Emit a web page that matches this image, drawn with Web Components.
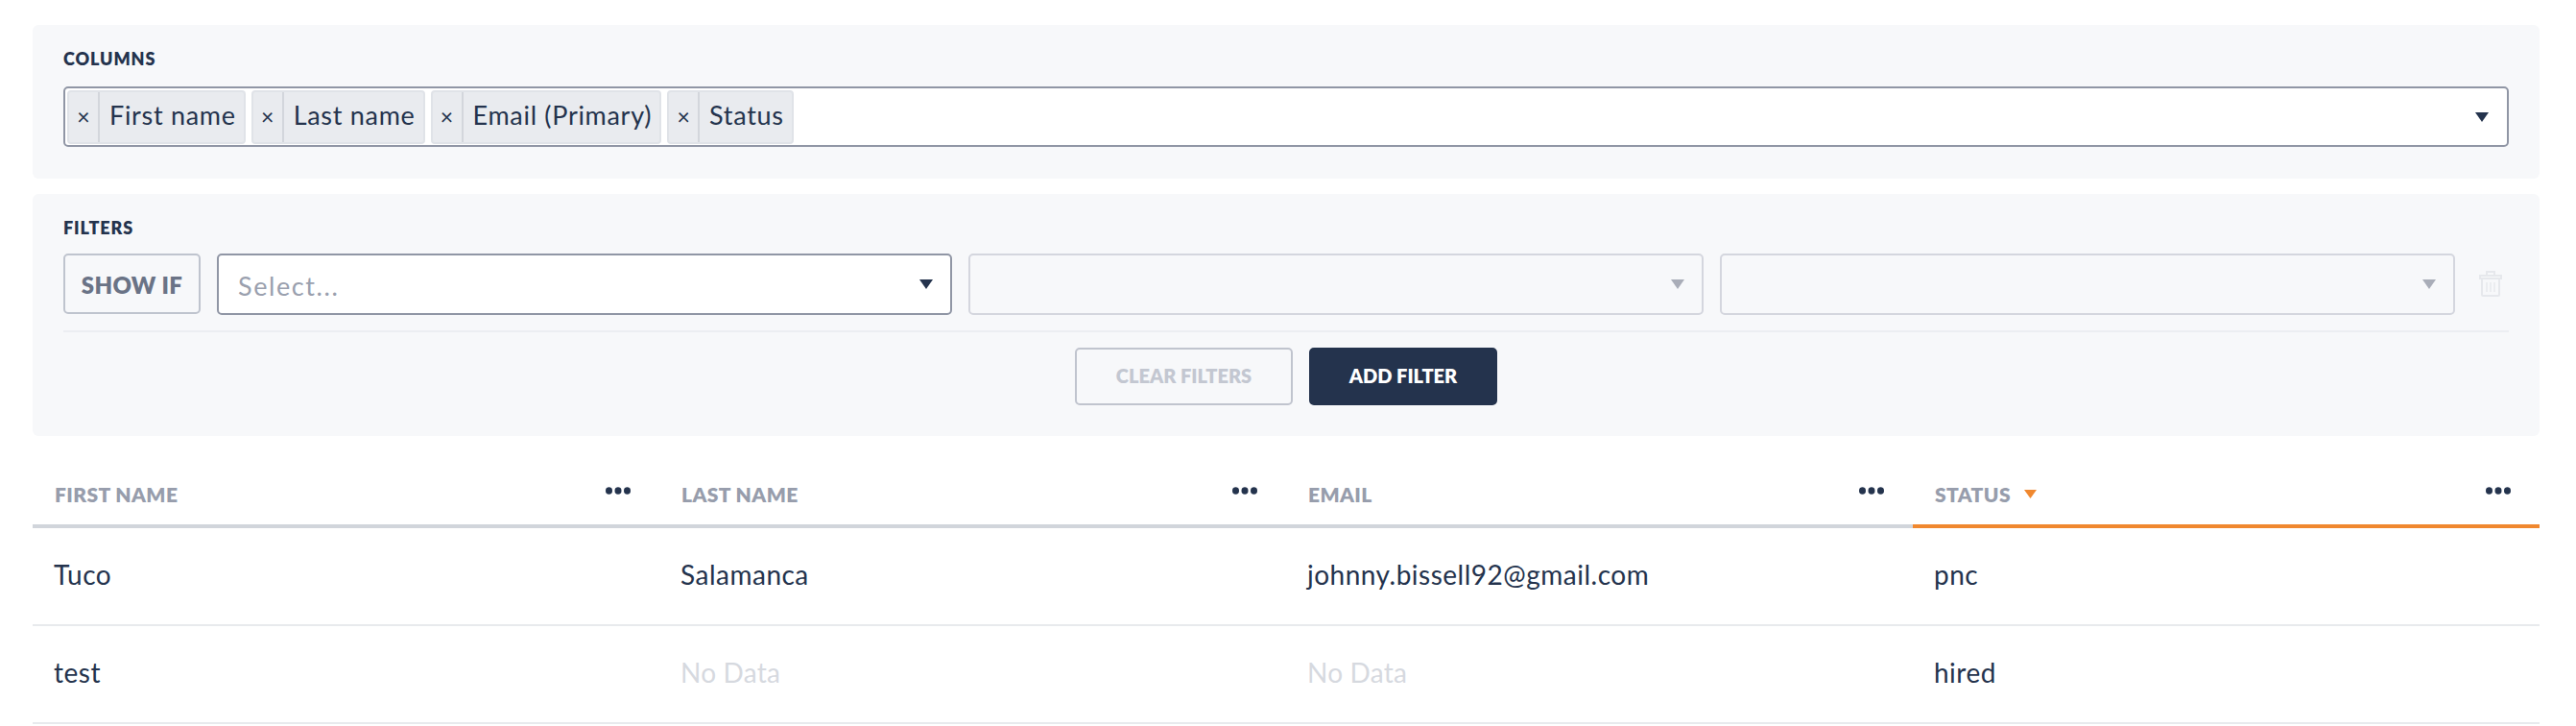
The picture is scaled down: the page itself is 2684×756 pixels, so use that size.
<!DOCTYPE html>
<html>
<head>
<meta charset="utf-8">
<title>Table</title>
<style>
  html, body { margin: 0; background: #fff; }
  body { font-family: Lato, "Open Sans", sans-serif; color: #24334d; }
</style>
</head>
<body>
<report-page>
  <filter-panel label="Columns" gap="19" bottom="33">
    <multi-select>
      <tag-chip>First name</tag-chip>
      <tag-chip>Last name</tag-chip>
      <tag-chip>Email (Primary)</tag-chip>
      <tag-chip>Status</tag-chip>
    </multi-select>
  </filter-panel>
  <filter-panel label="Filters" gap="17" bottom="32">
    <filter-row>
      <show-if>Show if</show-if>
      <filter-select placeholder="Select..."></filter-select>
      <filter-select disabled></filter-select>
      <filter-select disabled></filter-select>
      <trash-icon></trash-icon>
    </filter-row>
    <filter-actions>
      <action-button disabled>Clear filters</action-button>
      <action-button>Add filter</action-button>
    </filter-actions>
  </filter-panel>
  <data-table>
    <table-row header>
      <head-cell>First name</head-cell>
      <head-cell>Last name</head-cell>
      <head-cell>Email</head-cell>
      <head-cell sorted>Status</head-cell>
    </table-row>
    <table-row>
      <data-cell>Tuco</data-cell>
      <data-cell>Salamanca</data-cell>
      <data-cell>johnny.bissell92@gmail.com</data-cell>
      <data-cell>pnc</data-cell>
    </table-row>
    <table-row>
      <data-cell>test</data-cell>
      <data-cell empty>No Data</data-cell>
      <data-cell empty>No Data</data-cell>
      <data-cell>hired</data-cell>
    </table-row>
  </data-table>
</report-page>

<script>
const caret = '<svg width="14" height="10" viewBox="0 0 14 10"><path d="M0 0h14L7 10z" fill="currentColor"/></svg>';

// small helper so each element just declares its shadow markup
function define(tag, html, setup) {
  customElements.define(tag, class extends HTMLElement {
    constructor() {
      super();
      this.attachShadow({ mode: 'open' });
      this.shadowRoot.innerHTML = html;
    }
    connectedCallback() {
      if (setup) setup(this, this.shadowRoot);
    }
  });
}

define('report-page', `
  <style>
    :host { display: flex; flex-direction: column; gap: 16px; padding: 26px 38px 0 34px; }
    ::slotted(data-table) { margin-top: -16px; }
  </style>
  <slot></slot>
`);

define('filter-panel', `
  <style>
    :host { display: block; background: #f7f8fa; border-radius: 6px; padding: 25px 32px 0 32px; }
    .label {
      font-size: 18px; line-height: 20px; font-weight: 800; letter-spacing: 0.9px;
      text-transform: uppercase; color: #24334d;
    }
  </style>
  <div class="label"></div>
  <slot></slot>
`, (el, root) => {
  const label = root.querySelector('.label');
  label.textContent = el.getAttribute('label');
  label.style.marginBottom = el.getAttribute('gap') + 'px';
  el.style.paddingBottom = el.getAttribute('bottom') + 'px';
});

define('multi-select', `
  <style>
    :host {
      display: flex; align-items: flex-start; justify-content: space-between; box-sizing: border-box;
      height: 63px; background: #fff; border: 2px solid #9096a5; border-radius: 5px;
      padding: 2px 19px 1px 2px;
    }
    .tags { display: flex; gap: 6px; }
    .caret { color: #24334d; display: flex; align-items: center; height: 56px; }
    svg { display: block; }
  </style>
  <div class="tags"><slot></slot></div>
  <div class="caret">${caret}</div>
`);

define('tag-chip', `
  <style>
    :host {
      display: flex; box-sizing: border-box; height: 56px; background: #e9ebef;
      border: 2px solid #e0e3e8; border-radius: 4px; font-size: 27px; color: #24334d;
    }
    .x {
      box-sizing: border-box; width: 32px; padding-bottom: 2px; border-right: 2px solid #d3d6dc;
      display: flex; align-items: center; justify-content: center; font-size: 23px;
    }
    .text {
      display: flex; align-items: center; padding: 0 8px 5px 10px; white-space: nowrap;
      letter-spacing: 0.7px;
    }
  </style>
  <div class="x">×</div>
  <div class="text"><slot></slot></div>
`);

define('filter-row', `
  <style>
    :host {
      display: grid; grid-template-columns: 143px 766px 766px 766px 1fr; column-gap: 17px;
      height: 64px; padding-bottom: 16px; border-bottom: 2px solid #eceef2;
    }
  </style>
  <slot></slot>
`);

define('show-if', `
  <style>
    :host {
      display: flex; align-items: center; justify-content: center; box-sizing: border-box;
      height: 63px; padding-top: 1px; border: 2px solid #bfc4ce; border-radius: 5px;
      font-size: 24px; font-weight: 800; text-transform: uppercase; letter-spacing: 0.3px; color: #6a7386;
    }
  </style>
  <slot></slot>
`);

define('filter-select', `
  <style>
    :host {
      display: flex; align-items: center; justify-content: space-between; box-sizing: border-box;
      height: 64px; background: #fff; border: 2px solid #9096a5; border-radius: 5px;
      padding: 0 18px 0 20px; font-size: 27px; letter-spacing: 1.6px; color: #9aa0ae;
    }
    :host([disabled]) { background: #f7f8fa; border-color: #d4d6de; }
    .text { padding-top: 2px; }
    .caret { color: #24334d; display: flex; }
    :host([disabled]) .caret { color: #a9adb8; }
  </style>
  <span class="text"></span>
  <span class="caret">${caret}</span>
`, (el, root) => {
  root.querySelector('.text').textContent = el.getAttribute('placeholder') || '';
});

define('trash-icon', `
  <style>
    :host { display: flex; align-items: center; justify-content: flex-start; margin-left: 8px; height: 64px; }
    svg { display: block; margin-top: -2px; }
  </style>
  <svg width="24" height="27" viewBox="0 0 24 27" fill="none" stroke="#e6e8ec" stroke-width="2">
    <path d="M8 4V1h8v3"/>
    <path d="M1 8V5h22v3z"/>
    <path d="M3 8v17a1 1 0 0 0 1 1h16a1 1 0 0 0 1-1V8"/>
    <path d="M8 12v10M12 12v10M16 12v10" stroke-width="1.4"/>
  </svg>
`);

define('filter-actions', `
  <style>
    :host { display: flex; justify-content: center; gap: 17px; padding: 16px 0 0 0; }
  </style>
  <slot></slot>
`);

define('action-button', `
  <style>
    :host {
      display: flex; align-items: center; justify-content: center; box-sizing: border-box;
      width: 196px; height: 60px; padding-bottom: 2px; background: #24334d; border: 2px solid #24334d; border-radius: 5px;
      font-size: 20px; font-weight: 800; text-transform: uppercase; letter-spacing: 0; color: #fff;
    }
    :host([disabled]) { width: 227px; background: transparent; border-color: #c0c4ce; color: #c3c7d1; }
  </style>
  <slot></slot>
`);

define('data-table', `
  <style>
    :host { display: block; }
  </style>
  <slot></slot>
`);

define('table-row', `
  <style>
    :host { display: grid; grid-template-columns: repeat(4, 1fr); }
  </style>
  <slot></slot>
`);

define('head-cell', `
  <style>
    :host {
      display: flex; align-items: center; justify-content: space-between; box-sizing: border-box;
      height: 96px; padding: 28px 30px 0 23px; border-bottom: 4px solid #d1d5db;
      font-size: 21px; font-weight: 800; text-transform: uppercase; letter-spacing: 0.4px; color: #979dac;
    }
    :host([sorted]) { border-bottom-color: #f0882f; }
    .name { display: flex; align-items: center; gap: 14px; }
    .sort { display: none; }
    :host([sorted]) .sort { display: block; }
    .dots { display: block; margin-top: -6px; }
  </style>
  <span class="name">
    <slot></slot>
    <svg class="sort" width="13" height="9" viewBox="0 0 13 9"><path d="M0 0h13L6.5 9z" fill="#f0882f"/></svg>
  </span>
  <svg class="dots" width="26" height="8" viewBox="0 0 26 8" fill="#24334d">
    <ellipse cx="3.5" cy="4" rx="3.5" ry="3.8"/>
    <ellipse cx="13" cy="4" rx="3.5" ry="3.8"/>
    <ellipse cx="22.5" cy="4" rx="3.5" ry="3.8"/>
  </svg>
`);

define('data-cell', `
  <style>
    :host {
      display: flex; align-items: center; box-sizing: border-box; height: 102px;
      padding: 0 21px 5px 22px; border-bottom: 2px solid #e8eaed;
      font-size: 28px; letter-spacing: 0.5px; color: #24334d;
    }
    :host([empty]) { color: #d6d9df; letter-spacing: 0.2px; }
  </style>
  <slot></slot>
`);
</script>
</body>
</html>
